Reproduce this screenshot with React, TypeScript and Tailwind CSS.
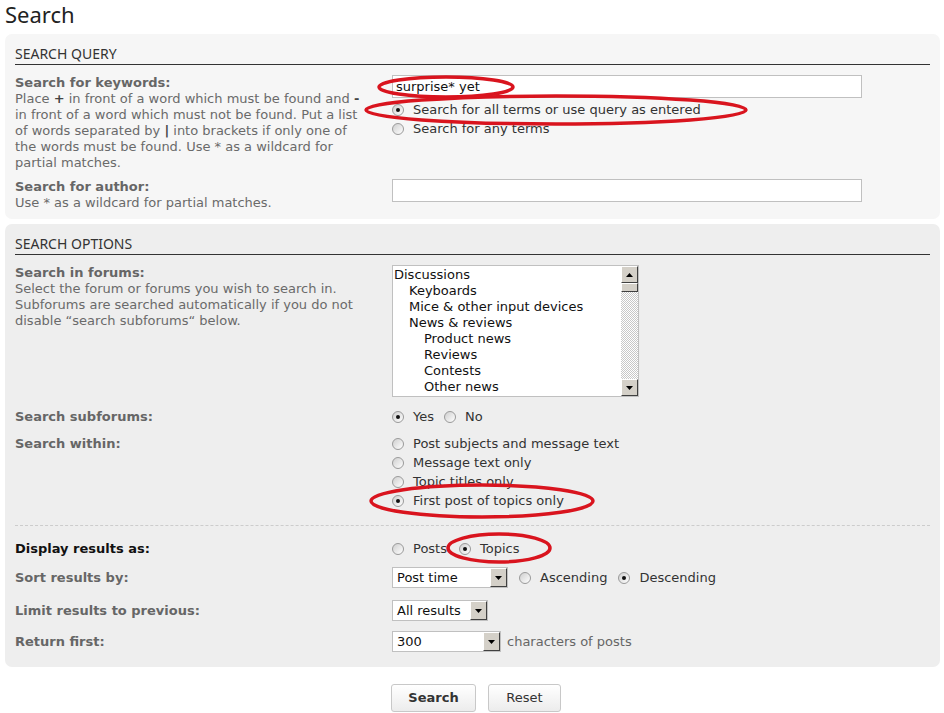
import React from 'react';

const FONT = "font-['DejaVu_Sans',Verdana,sans-serif]";

function Radio({ checked = false }: { checked?: boolean }) {
  return (
    <span className="inline-flex items-center justify-center w-[12px] h-[12px] rounded-full border border-[#9a9a9a] bg-gradient-to-br from-[#cfcfcf] to-[#ffffff] shrink-0">
      {checked && <span className="w-[4px] h-[4px] rounded-full bg-[#111]" />}
    </span>
  );
}

function RadioOpt({ label, checked = false }: { label: string; checked?: boolean }) {
  return (
    <span className="inline-flex items-center h-[19px]">
      <span className="w-[15px] flex justify-start">
        <Radio checked={checked} />
      </span>
      <span className="pl-[6px] text-[#333]">{label}</span>
    </span>
  );
}

function ArrowBtn({ dir = 'down' }: { dir?: 'up' | 'down' }) {
  return (
    <span className="flex items-center justify-center w-[17px] h-full bg-[#d4d0c8] border border-t-white border-l-white border-b-[#404040] border-r-[#404040] shrink-0">
      <svg width="7" height="4" viewBox="0 0 7 4">
        {dir === 'down' ? <path d="M0 0h7L3.5 4z" fill="#000" /> : <path d="M0 4h7L3.5 0z" fill="#000" />}
      </svg>
    </span>
  );
}

function Select({ value, width }: { value: string; width: string }) {
  return (
    <span className={`inline-flex h-[21px] bg-white border border-[#c0c0c0] ${width}`}>
      <span className="flex-1 pl-[4px] leading-[19px] text-[#111]">{value}</span>
      <span className="h-[19px] flex"><ArrowBtn /></span>
    </span>
  );
}

function Label({ title, desc, dark = false }: { title: string; desc?: React.ReactNode; dark?: boolean }) {
  return (
    <div className="leading-[16px] pr-[22px]">
      <div className={`font-bold ${dark ? 'text-[#111]' : 'text-[#666]'}`}>{title}</div>
      {desc && <div className="text-[#6a6a6a]">{desc}</div>}
    </div>
  );
}

function Header({ text }: { text: string }) {
  return (
    <div className="pt-[11px] mb-[10px]">
      <div className="font-['Noto_Sans',sans-serif] text-[14px] leading-[18px] text-[#333] pb-[1px] border-b border-[#333]">{text}</div>
    </div>
  );
}

const forums: [string, number][] = [
  ['Discussions', 0],
  ['Keyboards', 1],
  ['Mice & other input devices', 1],
  ['News & reviews', 1],
  ['Product news', 2],
  ['Reviews', 2],
  ['Contests', 2],
  ['Other news', 2],
];

export default function App() {
  return (
    <div className={`relative w-[944px] h-[713px] bg-white overflow-hidden ${FONT} text-[13px]`}>
      <h2 className="font-['Noto_Sans',sans-serif] text-[22px] leading-[28px] text-[#222] pl-[5px]">Search</h2>

      <div className="mx-[5px] mt-[6px] rounded-[7px] bg-[#f6f6f6] px-[10px] pb-[8px] w-[935px]">
        <Header text="SEARCH QUERY" />
        <div className="grid grid-cols-[377px_1fr] gap-y-[8px]">
          <Label
            title="Search for keywords:"
            desc={
              <>
                Place <b className="text-[#444]">+</b> in front of a word which must be found and <b className="text-[#444]">-</b> in front of a word which must not be found. Put a list of words separated by <b className="text-[#444]">|</b> into brackets if only one of the words must be found. Use * as a wildcard for partial matches.
              </>
            }
          />
          <div className="flex flex-col items-start">
            <div className="w-[470px] h-[23px] bg-white border border-[#c0c0c0] pl-[3px] leading-[21px] text-[#111] mb-[2px]">surprise* yet</div>
            <RadioOpt label="Search for all terms or use query as entered" checked />
            <RadioOpt label="Search for any terms" />
          </div>
          <Label title="Search for author:" desc="Use * as a wildcard for partial matches." />
          <div>
            <div className="w-[470px] h-[23px] bg-white border border-[#c0c0c0]" />
          </div>
        </div>
      </div>

      <div className="mx-[5px] mt-[5px] rounded-[7px] bg-[#eeeeee] px-[10px] pb-[15px] w-[935px]">
        <Header text="SEARCH OPTIONS" />
        <div className="grid grid-cols-[377px_1fr]">
          <Label
            title="Search in forums:"
            desc={<>Select the forum or forums you wish to search in. Subforums are searched automatically if you do not disable “search subforums“ below.</>}
          />
          <div>
            <div className="w-[247px] h-[132px] bg-white border border-[#c0c0c0] flex">
              <div className="flex-1 pt-[1px] leading-[16px] text-[#111]">
                {forums.map(([name, lvl]) => (
                  <div key={name} className={lvl === 0 ? 'pl-[1px]' : lvl === 1 ? 'pl-[16px]' : 'pl-[31px]'}>{name}</div>
                ))}
              </div>
              <div className="w-[17px] flex flex-col bg-[repeating-conic-gradient(#c8c8c8_0%_25%,#ffffff_0%_50%)] bg-[length:2px_2px]">
                <div className="h-[17px] flex"><ArrowBtn dir="up" /></div>
                <div className="h-[9px] w-[17px] bg-[#d4d0c8] border border-t-white border-l-white border-b-[#404040] border-r-[#404040]" />
                <div className="flex-1" />
                <div className="h-[17px] flex"><ArrowBtn /></div>
              </div>
            </div>
          </div>
        </div>

        <div className="grid grid-cols-[377px_1fr] gap-y-[8px] mt-[10px]">
          <div className="leading-[19px] font-bold text-[#666]">Search subforums:</div>
          <div className="flex gap-[10px]">
            <RadioOpt label="Yes" checked />
            <RadioOpt label="No" />
          </div>
          <div className="leading-[19px] font-bold text-[#666]">Search within:</div>
          <div className="flex flex-col items-start">
            <RadioOpt label="Post subjects and message text" />
            <RadioOpt label="Message text only" />
            <RadioOpt label="Topic titles only" />
            <RadioOpt label="First post of topics only" checked />
          </div>
        </div>

        <div className="border-t border-dashed border-[#cccccc] mt-[15px] mb-[13px]" />

        <div className="grid grid-cols-[377px_1fr] gap-y-[10px]">
          <div className="leading-[19px] font-bold text-[#111]">Display results as:</div>
          <div className="flex gap-[12px]">
            <RadioOpt label="Posts" />
            <RadioOpt label="Topics" checked />
          </div>
          <div className="leading-[21px] font-bold text-[#666] -mt-[1px]">Sort results by:</div>
          <div className="flex items-center gap-[11px] -mt-[1px]">
            <Select value="Post time" width="w-[116px]" />
            <RadioOpt label="Ascending" />
            <RadioOpt label="Descending" checked />
          </div>
          <div className="leading-[21px] font-bold text-[#666] pt-[2px]">Limit results to previous:</div>
          <div className="pt-[2px]"><Select value="All results" width="w-[96px]" /></div>
          <div className="leading-[21px] font-bold text-[#666]">Return first:</div>
          <div className="flex items-center gap-[6px]">
            <Select value="300" width="w-[109px]" />
            <span className="text-[#666]">characters of posts</span>
          </div>
        </div>
      </div>

      <div className="flex gap-[12px] pl-[391px] mt-[17px]">
        <button className="w-[85px] h-[28px] rounded-[3px] border border-[#c8c8c8] bg-gradient-to-b from-white to-[#ececec] font-bold text-[#333]">Search</button>
        <button className="w-[73px] h-[28px] rounded-[3px] border border-[#c8c8c8] bg-gradient-to-b from-white to-[#ececec] text-[#333]">Reset</button>
      </div>

      <svg className="absolute inset-0 pointer-events-none" width="944" height="713">
        <g fill="none" stroke="#d9141e" strokeWidth="3.5">
          <ellipse cx="446" cy="87" rx="67" ry="10" />
          <ellipse cx="556" cy="110" rx="190" ry="14" />
          <ellipse cx="482" cy="501" rx="111" ry="16" />
          <ellipse cx="499" cy="548" rx="51" ry="14" />
        </g>
      </svg>
    </div>
  );
}
